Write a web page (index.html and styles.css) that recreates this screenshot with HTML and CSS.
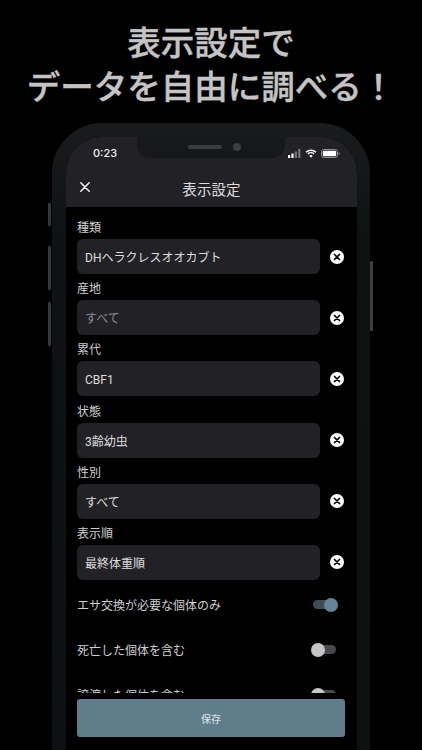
FILE: index.html
```html
<!DOCTYPE html>
<html lang="ja">
<head>
<meta charset="utf-8">
<title>表示設定</title>
<link rel="stylesheet" href="styles.css">
</head>
<body>
<svg class="defs" width="0" height="0" aria-hidden="true">
  <symbol id="clear" viewBox="0 0 14 14">
    <circle cx="7" cy="7" r="7" fill="#fff"/>
    <path d="M4.500 4.500l5 5M9.500 4.500l-5 5" stroke="#000" stroke-width="1.700" stroke-linecap="round"/>
  </symbol>
</svg>
<h1 class="headline">表示設定で<br>データを自由に調べる！</h1>
<div class="phone">
  <span class="side side-mute"></span>
  <span class="side side-up"></span>
  <span class="side side-down"></span>
  <span class="side side-power"></span>
  <div class="screen">
    <div class="notch"><span class="speaker"></span><span class="camera"></span></div>
    <header class="appbar">
      <div class="status">
        <span class="time">0:23</span>
        <span class="status-icons">
          <svg width="13" height="9" viewBox="0 0 13 9"><rect x="0" y="6" width="2.200" height="3" fill="#fff"/><rect x="3.400" y="4.500" width="2.200" height="4.500" fill="#fff"/><rect x="6.800" y="2.500" width="2.200" height="6.500" fill="#77777a"/><rect x="10.200" y="0" width="2.200" height="9" fill="#77777a"/></svg>
          <svg width="12" height="9" viewBox="0 0 12 9"><path d="M1 3.200a7.200 7.200 0 0 1 10 0M2.800 5a4.600 4.600 0 0 1 6.400 0" fill="none" stroke="#fff" stroke-width="1.400"/><path d="M6 8.800L4.300 6.800a2.500 2.500 0 0 1 3.400 0z" fill="#fff"/></svg>
          <svg width="19" height="9" viewBox="0 0 19 9"><rect x=".5" y=".5" width="16" height="8" rx="2.200" fill="none" stroke="#8b8b8e"/><rect x="1.800" y="1.800" width="13.400" height="5.400" rx="1" fill="#fff"/><path d="M17.600 3v3c.7-.2 1.200-.8 1.200-1.500s-.5-1.300-1.200-1.500z" fill="#8b8b8e"/></svg>
        </span>
      </div>
      <div class="titlebar">
        <svg class="close" width="10" height="10" viewBox="0 0 10 10"><path d="M.8.8l8.400 8.400M9.200.8L.8 9.200" stroke="#f2f2f2" stroke-width="1.500" stroke-linecap="round"/></svg>
        <span class="title">表示設定</span>
      </div>
    </header>
    <main class="list">
      <div class="field">
        <label class="label">種類</label>
        <div class="row"><div class="input">DHヘラクレスオオカブト</div><svg class="clear" width="14" height="14"><use href="#clear"/></svg></div>
      </div>
      <div class="field">
        <label class="label">産地</label>
        <div class="row"><div class="input placeholder">すべて</div><svg class="clear" width="14" height="14"><use href="#clear"/></svg></div>
      </div>
      <div class="field">
        <label class="label">累代</label>
        <div class="row"><div class="input">CBF1</div><svg class="clear" width="14" height="14"><use href="#clear"/></svg></div>
      </div>
      <div class="field">
        <label class="label">状態</label>
        <div class="row"><div class="input">3齢幼虫</div><svg class="clear" width="14" height="14"><use href="#clear"/></svg></div>
      </div>
      <div class="field">
        <label class="label">性別</label>
        <div class="row"><div class="input">すべて</div><svg class="clear" width="14" height="14"><use href="#clear"/></svg></div>
      </div>
      <div class="field">
        <label class="label">表示順</label>
        <div class="row"><div class="input">最終体重順</div><svg class="clear" width="14" height="14"><use href="#clear"/></svg></div>
      </div>
      <div class="switches">
        <div class="switch-row"><span class="switch-label">エサ交換が必要な個体のみ</span><span class="switch on"><i></i></span></div>
        <div class="switch-row"><span class="switch-label">死亡した個体を含む</span><span class="switch"><i></i></span></div>
        <div class="switch-row"><span class="switch-label">譲渡した個体を含む</span><span class="switch"><i></i></span></div>
      </div>
    </main>
    <footer class="footer"><button class="save">保存</button></footer>
  </div>
</div>
</body>
</html>
```

FILE: styles.css
```css
* { box-sizing: border-box; }
html, body { margin: 0; height: 750px; overflow: hidden; background: #000; }
body { font-family: "Roboto", "Noto Sans CJK JP", sans-serif; color: #d2d2d2; }
.defs { position: absolute; }

.headline {
  margin: 0;
  height: 123px;
  padding-top: 19px;
  text-align: center;
  font-family: "Noto Sans CJK JP", sans-serif;
  font-size: 33.500px;
  line-height: 44px;
  font-weight: 500;
  -webkit-text-stroke: .4px #c4c4c4;
  color: #c4c4c4;
  white-space: nowrap;
}

.phone {
  position: relative;
  width: 318px;
  height: 640px;
  margin-left: 52px;
  padding: 14px 13px 0 14px;
  background: linear-gradient(#1a1b1d 0, #101113 110px, #0e0f10 100%);
  border-radius: 50px 50px 0 0;
}
.side { position: absolute; background: #36373a; border-radius: 1px; width: 3px; }
.side-mute { left: -4px; top: 80px; height: 23px; }
.side-up { left: -4px; top: 123px; height: 44px; }
.side-down { left: -4px; top: 179px; height: 44px; }
.side-power { right: -3px; top: 138px; height: 70px; background: #3f4043; }

.screen {
  position: relative;
  display: flex;
  flex-direction: column;
  height: 626px;
  background: #000;
  border-radius: 36px 36px 0 0;
  overflow: hidden;
}

.notch {
  position: absolute;
  left: 71px;
  top: 0;
  width: 148px;
  height: 21px;
  display: flex;
  align-items: center;
  justify-content: center;
  gap: 11px;
  padding: 0 0 1px 7px;
  background: #17181a;
  border-radius: 0 0 13px 13px;
}
.speaker { width: 34px; height: 4px; border-radius: 2px; background: #3c3d40; }
.camera { width: 8px; height: 8px; border-radius: 50%; background: #3c3d40; }

.appbar { height: 70px; background: #222226; flex: none; }
.status {
  display: flex;
  justify-content: space-between;
  align-items: center;
  height: 32px;
  padding: 0 17px 0 27px;
}
.time { font-family: "Inter", sans-serif; font-size: 11px; font-weight: 500; color: #f0f0f0; }
.status-icons { display: flex; align-items: center; gap: 4px; }
.titlebar {
  position: relative;
  display: flex;
  align-items: center;
  justify-content: center;
  height: 38px;
}
.close { position: absolute; left: 14px; top: 13px; }
.title { font-size: 14.500px; color: #dcdcdc; letter-spacing: .1px; }

.list { flex: 1; min-height: 0; overflow: hidden; padding: 12px 11px 0; }
.field { margin-bottom: 6.200px; }
.field:nth-last-child(2) { margin-bottom: 0; }
.label { display: block; height: 20px; font-size: 12px; line-height: 19px; color: #cfcfcf; }
.row { display: flex; align-items: center; }
.input {
  width: 243px;
  height: 35px;
  padding: 4px 0 0 8px;
  background: #222226;
  border-radius: 6px;
  font-size: 12px;
  line-height: 31px;
  color: #dedede;
}
.placeholder { color: #8c8c8e; }
.clear { margin-left: 10px; flex: none; }

.switches { padding-top: 2.500px; }
.switch-row {
  display: flex;
  justify-content: space-between;
  align-items: center;
  height: 45px;
  font-size: 12px;
  line-height: 16px;
  color: #cfcfcf;
  padding-right: 10px;
}
.switch-label { padding-top: 2px; }
.switch {
  position: relative;
  width: 23px;
  height: 9px;
  border-radius: 5px;
  background: #4a4a4c;
}
.switch i {
  position: absolute;
  left: -2px;
  top: -2.500px;
  width: 14px;
  height: 14px;
  border-radius: 50%;
  background: #c6c6c6;
}
.switch.on { background: #3c4d58; }
.switch.on i { left: auto; right: -2px; background: #668496; }

.footer { flex: none; height: 70px; padding: 6px 12px 0 11px; background: #000; }
.save {
  display: block;
  width: 268px;
  height: 38px;
  border: 0;
  border-radius: 3px;
  background: #607d8b;
  font: inherit;
  font-size: 10px;
  color: #dfe6ea;
}
```
